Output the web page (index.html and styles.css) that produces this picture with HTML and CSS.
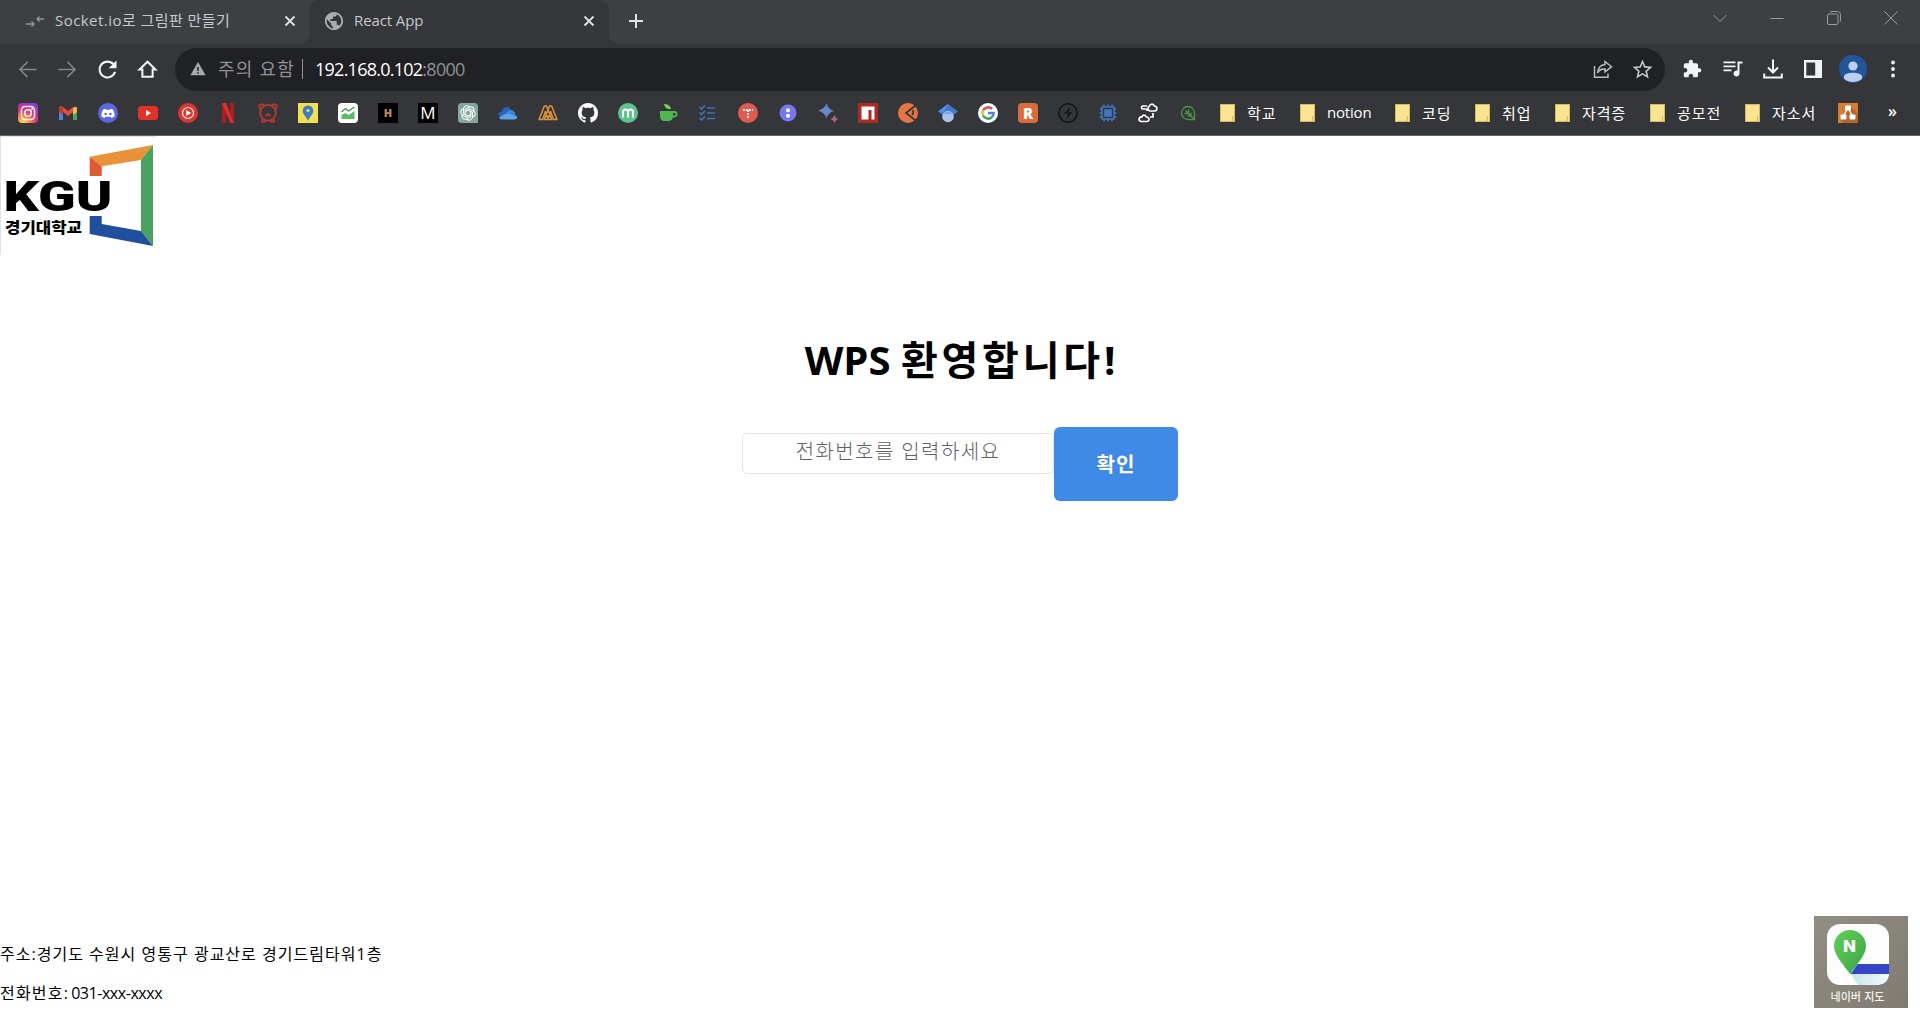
FILE: index.html
```html
<!DOCTYPE html>
<html lang="ko">
<head>
<meta charset="utf-8">
<title>React App</title>
<link rel="stylesheet" href="styles.css">
</head>
<body>
<header class="browser">
  <div class="tabstrip">
    <div class="tab tab-first">
      <svg class="favicon" viewBox="0 0 20 20" fill="none" stroke="#94979a" stroke-width="1.3"><path d="M1 13h8M6.500 10.500 9 13l-2.500 2.500M19 8h-7M14.500 5.500 12 8l2.500 2.500"/></svg>
      <span class="tab-title title-socket">Socket.io로 그림판 만들기</span>
      <svg class="tab-close" viewBox="0 0 12 12"><path d="m1.500 1.500 9 9m0-9-9 9"/></svg>
    </div>
    <div class="tab tab-active">
      <svg class="favicon" viewBox="1 1 22 22"><circle cx="12" cy="12" r="9.500" fill="#35363a"/><path fill="#a9acb0" d="M12 2C6.480 2 2 6.480 2 12s4.480 10 10 10 10-4.480 10-10S17.520 2 12 2zm-1 17.930c-3.950-.490-7-3.850-7-7.930 0-.620.080-1.210.210-1.790L9 15v1c0 1.100.900 2 2 2v1.930zm6.900-2.540c-.260-.810-1-1.390-1.900-1.390h-1v-3c0-.550-.450-1-1-1H8v-2h2c.550 0 1-.450 1-1V7h2c1.100 0 2-.900 2-2v-.410c2.930 1.190 5 4.060 5 7.410 0 2.080-.800 3.970-2.100 5.390z"/></svg>
      <span class="tab-title title-react">React App</span>
      <svg class="tab-close" viewBox="0 0 12 12"><path d="m1.500 1.500 9 9m0-9-9 9"/></svg>
    </div>
    <svg class="new-tab" viewBox="0 0 16 16"><path d="M8 1v14M1 8h14" stroke="#dfe1e5" stroke-width="2"/></svg>
    <div class="window-controls">
      <svg viewBox="0 0 14 14"><path d="m.5 4 6.500 6.500L13.500 4"/></svg>
      <svg viewBox="0 0 14 14"><path d="M.5 7.500h13"/></svg>
      <svg viewBox="0 0 14 14"><rect x=".5" y="3" width="10.500" height="10.500" rx="1.500"/><path d="M3 1.200Q3.500.500 5 .5h5.500q3 0 3 3V9q0 1.500-.8 2"/></svg>
      <svg viewBox="0 0 14 14"><path d="m.5.500 13 13m0-13-13 13"/></svg>
    </div>
  </div>

  <div class="toolbar">
    <div class="nav">
      <svg viewBox="0 0 24 24" fill="#85878a"><path d="M21.500 11.200H6l6.600-6.600L11.500 3.500 3 12l8.500 8.500 1.100-1.100L6 12.800h15.500z"/></svg>
      <svg viewBox="0 0 24 24" fill="#85878a"><path d="M2.500 11.200H18l-6.600-6.600 1.100-1.100L21 12l-8.500 8.500-1.100-1.100 6.600-6.600H2.500z"/></svg>
      <svg viewBox="0 0 24 24" fill="#f1f3f4"><path d="M18.700 5.300C17 3.600 14.600 2.600 12 2.600a9.400 9.400 0 1 0 9.100 11.800h-2.400A7.150 7.150 0 1 1 12 4.900c2 0 3.700.8 5 2.100L13.200 10.800H21.400V2.600z"/></svg>
      <svg viewBox="-1 -1 26 26" fill="none" stroke="#f1f3f4" stroke-width="2.300"><path d="M3 12h3.200v8.300h11.600V12H21l-9-8.800z"/></svg>
    </div>
    <div class="omnibox">
      <svg class="warn" viewBox="0 0 24 22"><path fill="#a7aaad" d="M0 21h24L12 0z"/><path stroke="#202124" stroke-width="2.400" d="M12 8v6m0 2v2.500"/></svg>
      <span class="insecure">주의 요함</span>
      <span class="divider"></span>
      <span class="url">192.168.0.102<span class="port">:8000</span></span>
      <svg class="share" viewBox="0 0 20 20" fill="none" stroke="#b9bbbe" stroke-width="1.500"><path d="M1.500 7v11.200H15V14.500M12 2.500l6.500 5.200-6.500 5.200V10c-4-.2-6 1-7.500 4C5 9 7.500 5.800 12 5.400z"/></svg>
      <svg class="star" viewBox="1.500 1.500 21 21" fill="#c6c8ca"><path d="M22 9.240l-7.190-.62L12 2 9.190 8.630 2 9.240l5.460 4.730L5.820 21 12 17.270 18.180 21l-1.630-7.030L22 9.240zM12 15.400l-3.760 2.270 1-4.280-3.320-2.880 4.380-.38L12 6.100l1.710 4.040 4.380.38-3.320 2.880 1 4.280L12 15.400z"/></svg>
    </div>
    <div class="actions">
      <svg viewBox="1 0 24 24" fill="#f1f3f4"><path d="M20.500 11H19V7c0-1.100-.900-2-2-2h-4V3.500C13 2.120 11.880 1 10.500 1S8 2.120 8 3.500V5H4c-1.100 0-1.990.900-1.990 2v3.800H3.500c1.490 0 2.700 1.210 2.700 2.700s-1.210 2.700-2.700 2.700H2V20c0 1.100.900 2 2 2h3.800v-1.500c0-1.490 1.210-2.700 2.700-2.700s2.700 1.210 2.700 2.700V22H17c1.100 0 2-.900 2-2v-4h1.500c1.380 0 2.500-1.120 2.500-2.500S21.880 11 20.500 11z"/></svg>
      <svg viewBox="2.500 2.500 20 20" fill="#f1f3f4"><path d="M15 5H3v1.800h12zm0 4H3v1.800h12zM3 14.800h8V13H3zM17 5v9.180A3 3 0 1 0 19 17V7h3V5z"/></svg>
      <svg viewBox="0 0 20 20" fill="none" stroke="#f1f3f4" stroke-width="2"><path d="M10 .5V13M5 8.500l5 5 5-5M1.200 14.500v4h17.600v-4"/></svg>
      <svg viewBox="0 0 20 20"><path fill="#f1f3f4" fill-rule="evenodd" d="M1 1h18v18H1zm2.300 2.500v13h8.900v-13z"/></svg>
      <svg class="avatar" viewBox="0 0 28 28"><circle cx="14" cy="14" r="14" fill="#21569a"/><circle cx="14" cy="11" r="4.600" fill="#b9cfea"/><path fill="#b9cfea" d="M5 21.500c0-5 18-5 18 0v2.200a14 14 0 0 1-18 0z"/></svg>
      <svg viewBox="0 0 20 20" fill="#f1f3f4"><circle cx="10" cy="3.500" r="1.900"/><circle cx="10" cy="10" r="1.900"/><circle cx="10" cy="16.500" r="1.900"/></svg>
    </div>
  </div>

  <nav class="bookmarks">
    <svg viewBox="0 0 20 20"><defs><radialGradient id="insta" cx=".25" cy="1" r="1.100"><stop offset="0" stop-color="#ffdc60"/><stop offset=".3" stop-color="#fb8c3c"/><stop offset=".6" stop-color="#e82f79"/><stop offset="1" stop-color="#8a3bdd"/></radialGradient></defs><rect width="20" height="20" rx="4" fill="url(#insta)"/><g fill="none" stroke="#fff" stroke-width="1.500"><rect x="3.500" y="3.500" width="13" height="13" rx="3.500"/><circle cx="10" cy="10" r="3.300"/></g><circle cx="14" cy="6" r="1" fill="#fff"/></svg>
    <svg viewBox="0 0 20 20"><path fill="#4a86e0" d="M1 5h4v12H1z"/><path fill="#48a55a" d="M15 5h4v12h-4z"/><path fill="#f2bb42" d="M15 5q4-3 4 1v3l-4 3z"/><path fill="#dc5044" d="M1 9V5.500C1 2.500 3 2.500 5 4l5 4 5-4v5l-5 4-5-4z"/><path fill="#b83b31" d="M1 9V5.500Q1 3 4 3.400L5 4v8z"/></svg>
    <svg viewBox="0 0 20 20"><circle cx="10" cy="10" r="10" fill="#5b68e5"/><path fill="#fff" d="M7.500 5.700 5 6.500Q3 10 3.500 13.500L6.500 15l.8-1.300h5.400l.8 1.300 3-1.500q.5-3.500-1.500-7l-2.500-.8-.6 1H8.100z"/><circle cx="7.600" cy="11" r="1.300" fill="#5b68e5"/><circle cx="12.400" cy="11" r="1.300" fill="#5b68e5"/></svg>
    <svg viewBox="0 0 20 20"><rect y="3" width="20" height="14" rx="3.500" fill="#e53227"/><path fill="#fff" d="M8 7v6l5-3z"/></svg>
    <svg viewBox="0 0 20 20"><circle cx="10" cy="10" r="10" fill="#df352c"/><circle cx="10" cy="10" r="5.500" fill="none" stroke="#fff" stroke-width="1.200"/><path fill="#fff" d="M8.200 7v6l5-3z"/></svg>
    <svg viewBox="0 0 20 20"><path fill="#a62020" d="M4 0h4v20l-4 .2zM12 0h4v20.200l-4-.2z"/><path fill="#df2c2d" d="M4 0h4l8 20-4-.3z"/></svg>
    <svg viewBox="0 0 20 20" fill="none" stroke="#b43a2e" stroke-width="1.900"><path d="M6 2.500C3-.5-.5 3 2.300 5.800M14 2.500C17-.5 20.500 3 17.700 5.800M3.500 18.800h4M12.500 18.800h4M4.500 16.500 3.500 19M15.500 16.500l1 2.500"/><circle cx="10" cy="9.800" r="7.900"/><path d="m7.300 13.200 2.700-2.400 2.700 2.400" stroke-width="1.600"/></svg>
    <svg viewBox="0 0 20 20"><path fill="#f4df4c" d="M0 0h20v20H0z"/><path fill="#397bcf" d="M10 2.500A5.300 5.300 0 0 1 15.300 8C15.300 11 11.500 14 10 18c-1.500-4-5.300-7-5.300-10A5.300 5.300 0 0 1 10 2.500z"/><circle cx="10" cy="7.500" r="1.600" fill="#f4df4c"/></svg>
    <svg viewBox="0 0 20 20"><rect width="20" height="20" rx="4" fill="#fff"/><path fill="#5bbb67" d="m3.500 12 4-2 3 2 6-4v8h-13z"/><path fill="none" stroke="#3c8b4c" stroke-width="1.200" d="m3.500 9 4-3.500 3 2.500 6-4"/></svg>
    <svg viewBox="0 0 20 20"><path d="M0 0h20v20H0z"/><text class="glyph-h" x="10" y="14">H</text></svg>
    <svg viewBox="0 0 20 20"><path d="M0 0h20v20H0z"/><text class="glyph-m" x="10" y="16">M</text></svg>
    <svg viewBox="0 0 20 20"><path fill="#82a79d" d="M3.500 0h13A3.500 3.500 0 0 1 20 3.500V20H3.500A3.500 3.500 0 0 1 0 16.500v-13A3.500 3.500 0 0 1 3.500 0z"/><g fill="none" stroke="#fff" stroke-width="1.050"><path id="petal" d="M7.300 11.600V6.400l4-2.300c3-1.400 5.500 1.300 4.500 4.200"/><use href="#petal" transform="rotate(60 10 10)"/><use href="#petal" transform="rotate(120 10 10)"/><use href="#petal" transform="rotate(180 10 10)"/><use href="#petal" transform="rotate(240 10 10)"/><use href="#petal" transform="rotate(300 10 10)"/></g></svg>
    <svg viewBox="0 0 20 20"><path fill="#2c62bd" d="M1 13Q-.5 9 3.500 8.500C5 3 11 2.500 13 7l-2 5z"/><path fill="#3f84db" d="M8.500 9.500C11 5.500 16.500 7 17 10.500l1 3-10-1z"/><path fill="#5ba6e8" d="M1 14.200Q6 11 9 10.500l10.300 3Q19.500 16.500 16 16.500H4q-2.200 0-3-2.300z"/></svg>
    <svg viewBox="0 0 20 20" fill="none" stroke="#db943a" stroke-width="1.500" stroke-linejoin="round"><path d="M1 16.500 6.300 3h2.200l5.200 13.500h-3.500L7.400 8.500 4.600 16.500zM6.300 16.500 11.500 3h2.200L19 16.500h-3.600L12.600 8.500 9.800 16.500z"/></svg>
    <svg viewBox="0 0 16 16"><path fill="#fff" d="M8 0C3.580 0 0 3.580 0 8c0 3.540 2.290 6.530 5.470 7.590.4.070.55-.17.55-.38 0-.19-.01-.82-.01-1.490-2.010.37-2.530-.49-2.690-.94-.09-.23-.48-.94-.82-1.130-.28-.15-.68-.52-.01-.53.630-.01 1.080.58 1.230.82.720 1.210 1.870.87 2.330.66.070-.52.280-.87.510-1.070-1.780-.2-3.640-.89-3.640-3.950 0-.87.310-1.590.82-2.150-.08-.2-.36-1.020.08-2.120 0 0 .67-.21 2.200.82.640-.18 1.320-.27 2-.27s1.360.09 2 .27c1.530-1.040 2.200-.82 2.200-.82.440 1.100.16 1.920.08 2.120.51.560.82 1.270.82 2.150 0 3.070-1.870 3.750-3.650 3.950.29.250.54.730.54 1.480 0 1.070-.01 1.930-.01 2.200 0 .21.150.46.550.38A8.010 8.010 0 0 0 16 8c0-4.420-3.580-8-8-8z"/></svg>
    <svg viewBox="0 0 20 20"><circle cx="10" cy="10" r="10" fill="#5cc58d"/><path fill="none" stroke="#fff" stroke-width="2" d="M5 14.500V9q0-2.500 2.500-2.500T10 9v5.500M10 9q0-2.500 2.500-2.500T15 9v5.500"/></svg>
    <svg viewBox="0 0 20 20"><path fill="#51b850" d="M2 8h13v4.500q0 5.500-5 5.500H7q-5 0-5-5.500z"/><path fill="none" stroke="#51b850" stroke-width="1.800" d="M14 9h2.500q2.500 0 2 2.500t-4.500 2"/><path fill="#71d35c" d="M6 1q6 0 7 5-6 1-7-5z"/></svg>
    <svg viewBox="0 0 20 20" fill="none" stroke="#416fbb" stroke-width="1.700"><path d="m1.500 4 2 2 3.500-3.500m-5.500 7 2 2L7 8m-5.500 7 2 2L7 13.500M9 5h8M9 10h8M9 15.500h8"/></svg>
    <svg viewBox="0 0 20 20"><circle cx="10" cy="10" r="10" fill="#e45a50"/><path fill="none" stroke="#fff" stroke-width="1.800" stroke-dasharray="2 1" d="M5 7h10M10 7v9"/></svg>
    <svg viewBox="0 0 20 20"><circle cx="10" cy="10" r="8.500" fill="#7777ef"/><circle cx="10" cy="7.300" r="2" fill="#fff"/><circle cx="10" cy="12.700" r="2" fill="#fff"/></svg>
    <svg viewBox="0 0 20 20"><defs><linearGradient id="spark" y2="1"><stop stop-color="#d25f72"/><stop offset=".5" stop-color="#5590dd"/><stop offset="1" stop-color="#c15f75"/></linearGradient></defs><path fill="url(#spark)" d="M8.500 0Q10 6.500 16 8q-6 1.500-7.500 7.500Q7 9.500 0 7.500 7 6 8.500 0z"/><path fill="#b16583" d="M16.500 12q.8 3 3.500 4-2.700 1-3.500 4-1-3-4-4 3-1 4-4z"/></svg>
    <svg viewBox="0 0 20 20"><path fill="#ad2922" d="M0 0h20v20H0z"/><path fill="#fff" d="M3.500 3.500h13v13h-3V7h-3v9.500h-7z"/></svg>
    <svg viewBox="0 0 20 20"><circle cx="10" cy="10" r="10" fill="#e77542"/><path fill="none" stroke="#35363a" stroke-width="1.700" d="M17.500 2.500 8 10l9.500 7.500M14.500 7q2 2-.5 5"/></svg>
    <svg viewBox="0 0 20 20"><path fill="#4278cd" d="M10 1 0 8.500 4.500 12h11L20 8.500z"/><path fill="#5693e9" d="M10 1 0 8.500 6 9z"/><circle cx="10" cy="13.500" r="5.800" fill="#a8c3ed"/><path fill="#79a5e5" d="M4.800 11q5-5 10.400 0z"/></svg>
    <svg viewBox="0 0 20 20"><circle cx="10" cy="10" r="10" fill="#fff"/><g fill="none" stroke-width="2.500"><path stroke="#dc5145" d="M5 7.500A5.600 5.600 0 0 1 14 6"/><path stroke="#eebb3d" d="M5 7.500a5.600 5.600 0 0 0 0 5"/><path stroke="#43a35a" d="M5 12.500a5.600 5.600 0 0 0 8.800 1.700"/><path stroke="#4c82e5" d="M13.800 14.200A5.600 5.600 0 0 0 15.600 10H10"/></g></svg>
    <svg viewBox="0 0 20 20"><rect width="20" height="20" rx="4" fill="#dc6d3a"/><text class="glyph-r" x="10" y="15.500">R</text></svg>
    <svg viewBox="0 0 20 20"><circle cx="10" cy="10" r="9.200" fill="none" stroke="#111214" stroke-width="1.400"/><path fill="#111214" d="m12.500 4-6.800 7 4.500-1-1.800 6 6-7-4 .6z"/></svg>
    <svg viewBox="0 0 20 20" fill="none" stroke="#4276bd" stroke-width="1.600"><path d="M6 1.500v17M10 1.500v17M14 1.500v17M1.500 6h17M1.500 10h17M1.500 14h17"/><rect x="4" y="4" width="12" height="12" fill="#35363a"/><rect x="7" y="7" width="6" height="6" fill="#4276bd"/></svg>
    <svg viewBox="0 0 20 20" fill="none" stroke="#fff" stroke-width="1.700"><path d="M12 8q-3-1-1.500-4 3-5 6-1 3.500 1 2 4-.5 1-2 1zM3 18.500q-3-1-1.500-3.500.8-1.200 2.200-1 2.300-4 4.700 0 3.200.4 2.500 3-.4 1.500-2 1.500zM9 3H5q-1.500 0-1.500 1.500T5 6h3q1 0 1 2M15 10v4h-3"/></svg>
    <svg viewBox="0 0 20 20" fill="none" stroke="#4b974b" stroke-width="1.300"><path d="M16.500 16.500H10A6.500 6.500 0 1 1 16.500 10zM16.500 16.500l-9-9m3 3V6.500m0 4H6.500m6.500 2.500V9.500m0 3.500h-3.500"/></svg>
    <div class="folder"><i></i><span>학교</span></div>
    <div class="folder wide"><i></i><span class="latin">notion</span></div>
    <div class="folder"><i></i><span>코딩</span></div>
    <div class="folder"><i></i><span>취업</span></div>
    <div class="folder wide"><i></i><span>자격증</span></div>
    <div class="folder wide"><i></i><span>공모전</span></div>
    <div class="folder wide"><i></i><span>자소서</span></div>
    <svg viewBox="0 0 20 20"><path fill="#d77c31" d="M0 0h20v20H0z"/><path fill="#b8652a" d="m12 3 8 8v9H5l-2-3z"/><path stroke="#fff" stroke-width="1.400" d="m10 5-5 9m5-9 5 9"/><g fill="#fff"><rect x="7" y="2.500" width="6" height="5" rx="1"/><rect x="2.500" y="11.500" width="6" height="5" rx="1"/><rect x="11.500" y="11.500" width="6" height="5" rx="1"/></g></svg>
    <span class="more">»</span>
  </nav>
</header>

<main class="page">
  <svg class="logo" viewBox="0 0 156 119">
    <path fill="#dadada" d="M0 0h.8v119H0zM0 0h156v.8H0z"/>
    <path fill="#e89338" d="M89.700 20.700 153 9l-12 15-39.300 6.300z"/>
    <path fill="#df5b32" d="m89.700 20.700 12 9.600V40h-12z"/>
    <path fill="#49a35d" d="M153 9v101l-12-15V24z"/>
    <path fill="#204fa0" d="M89.700 80h12v8l39.300 7 12 15-63.300-12z"/>
    <text class="kgu" x="3.500" y="75" textLength="109" lengthAdjust="spacingAndGlyphs">KGU</text>
    <text class="univ" x="5" y="97" textLength="77" lengthAdjust="spacingAndGlyphs">경기대학교</text>
  </svg>
  <h1 class="welcome">WPS <span class="welcome-ko">환영합니다</span>!</h1>
  <form class="login">
    <input class="phone" type="text" placeholder="전화번호를 입력하세요">
    <button class="confirm" type="button">확인</button>
  </form>
  <footer class="footer">
    <div class="contact">
      <p class="address">주소:경기도 수원시 영통구 광교산로 경기드림타워1층</p>
      <p class="tel"><span class="tel-label">전화번호</span>: 031-xxx-xxxx</p>
    </div>
    <svg class="map" viewBox="0 0 94 92">
      <defs>
        <linearGradient id="stone" x2="1" y2="1"><stop stop-color="#918e84"/><stop offset="1" stop-color="#807b72"/></linearGradient>
        <linearGradient id="pin" y2="1"><stop stop-color="#5fd053"/><stop offset="1" stop-color="#3da34b"/></linearGradient>
        <linearGradient id="shade" x2="1"><stop stop-color="#c5e4ec"/><stop offset="1" stop-color="#f5fafc"/></linearGradient>
      </defs>
      <path fill="url(#stone)" d="M0 0h94v92H0z"/>
      <rect x="13" y="8" width="62" height="61" rx="13" fill="#fdfdfe"/>
      <path fill="url(#shade)" d="M37 58h38q-1 11-13 11H44z"/>
      <path fill="#3546cb" d="M43.500 48H75v10H36.500z"/>
      <path fill="url(#pin)" d="M36 14a16 16 0 0 1 16 16c0 9-9 18-16 28-7-10-16-19-16-28a16 16 0 0 1 16-16z"/>
      <text class="naver-n" x="35.500" y="35.500" textLength="13" lengthAdjust="spacingAndGlyphs">N</text>
      <text class="naver-label" x="43.500" y="85" textLength="54" lengthAdjust="spacingAndGlyphs">네이버 지도</text>
    </svg>
  </footer>
</main>
</body>
</html>
```
FILE: styles.css
```css
* { box-sizing: border-box; }

body {
  margin: 0;
  height: 1018px;
  display: flex;
  flex-direction: column;
  overflow: hidden;
  background: #fff;
  color: #000;
  font-family: "Open Sans", "Noto Sans CJK KR", sans-serif;
}

svg { display: block; flex: none; overflow: visible; }

/* Browser frame */
.browser {
  height: 136px;
  flex: none;
  background: #35363a;
  border-bottom: 1px solid #686769;
}

.tabstrip {
  height: 44px;
  display: flex;
  align-items: center;
  background: #35363a;
}

.tab {
  height: 44px;
  display: flex;
  align-items: center;
  padding-bottom: 2px;
  font-size: 15px;
  color: #c6c8cb;
  white-space: nowrap;
}

.tab-first {
  width: 309px;
  padding-left: 25px;
  background: #3c4043;
  border-radius: 0 0 10px 0;
}

.tab-active {
  width: 300px;
  padding-left: 15px;
  background: #35363a;
  border-radius: 10px 10px 0 0;
  box-shadow: 0 -10px 0 #3c4043;
}

.favicon { width: 20px; height: 20px; margin-right: 10px; }
.tab-title { flex: 1; margin-top: -3px; }
.title-socket { letter-spacing: 0.45px; }
.title-react { letter-spacing: -0.1px; }
.tab-close {
  width: 12px;
  height: 12px;
  margin-right: 13px;
  fill: none;
  stroke: #dfe1e5;
  stroke-width: 1.8;
}

.tab-active .tab-close { margin-right: 14px; }

.tabstrip > .new-tab {
  width: 50px;
  height: 44px;
  padding: 13px 15px 15px 19px;
  background: #3c4043;
  border-radius: 0 0 0 10px;
}

.window-controls {
  flex: 1;
  height: 44px;
  padding: 11px 22px 0 0;
  display: flex;
  justify-content: flex-end;
  gap: 43px;
  background: #3c4043;
}

.window-controls svg {
  width: 14px;
  height: 14px;
  fill: none;
  stroke: #9b9ea1;
}

.toolbar {
  height: 52px;
  padding: 0 18px 2px 16px;
  display: flex;
  align-items: center;
}

.nav { width: 159px; flex: none; display: flex; gap: 17px; }
.nav svg { width: 23px; height: 23px; }

.omnibox {
  width: 1490px;
  flex: none;
  height: 43px;
  padding: 0 12px 0 15px;
  display: flex;
  align-items: center;
  border-radius: 22px;
  background: #202124;
  color: #8f9296;
  font-size: 18px;
  white-space: nowrap;
}

.warn { width: 16px; height: 14px; margin-right: 12px; }
.insecure { width: 84px; letter-spacing: 1.2px; margin-top: -3px; }
.divider { width: 1px; height: 20px; margin-right: 12px; background: #909397; }
.url { flex: 1; color: #fff; letter-spacing: -0.75px; margin-top: -1px; }
.port { color: #8f9296; }
.share { width: 20px; height: 20px; margin-right: 19px; }
.star { width: 21px; height: 21px; }

.actions { flex: 1; display: flex; align-items: center; gap: 20px; padding-left: 18px; }
.actions svg { width: 20px; height: 20px; }
.actions .avatar { width: 28px; height: 28px; margin: 0 -4px; }

.bookmarks {
  height: 34px;
  padding-left: 18px;
  display: flex;
  align-items: center;
}

.bookmarks svg { width: 20px; height: 20px; margin-right: 20px; }

.folder {
  width: 80px;
  flex: none;
  display: flex;
  align-items: center;
  color: #fff;
  font-size: 15px;
  white-space: nowrap;
}

.folder.wide { width: 95px; }

.folder i {
  width: 15px;
  height: 18px;
  margin: 0 12px 0 2px;
  border: 1px solid #d0b95e;
  background: linear-gradient(#d0b95e, #d0b95e) 11px 11px / 1px 6px no-repeat, #fae391;
}

.folder span { letter-spacing: 1px; margin-top: -2px; }
.folder .latin { letter-spacing: -0.2px; }
.bookmarks .folder ~ svg { margin-right: 30px; }
.more { color: #fff; font-size: 16px; font-weight: 600; margin-top: -4px; }

.glyph-h, .glyph-m, .glyph-r { text-anchor: middle; font-family: "Open Sans", sans-serif; }
.glyph-h { font-size: 11px; font-weight: 800; fill: #b68b55; }
.glyph-m { font-size: 17px; fill: #fff; }
.glyph-r { font-size: 15px; font-weight: 800; fill: #fff; }

/* Page */
.page {
  flex: 1;
  display: flex;
  flex-direction: column;
  align-items: center;
}

.logo { width: 156px; height: 119px; align-self: flex-start; }
.kgu { font: 900 43px Roboto, sans-serif; }
.univ { font: 900 15px "Noto Sans CJK KR", sans-serif; }

.welcome {
  margin: 77px 0 0;
  height: 56px;
  line-height: 56px;
  font-size: 40px;
  font-weight: 700;
  white-space: nowrap;
}

.welcome-ko { letter-spacing: 3.8px; }

.login {
  height: 74px;
  margin-top: 39px;
  display: flex;
}

.phone {
  width: 312px;
  height: 41px;
  margin-top: 6px;
  padding: 0 0 4px;
  border: 1px solid #e3e4e6;
  border-radius: 5px;
  outline: 0;
  text-align: center;
  font: 300 20px "Open Sans", "Noto Sans CJK KR", sans-serif;
  letter-spacing: 1.4px;
}

.phone::placeholder { color: #606060; }

.confirm {
  width: 124px;
  height: 74px;
  padding: 0 0 2px;
  border: 0;
  border-radius: 6px;
  background: #3f8ae7;
  color: #fff;
  font: 700 20px "Open Sans", "Noto Sans CJK KR", sans-serif;
  letter-spacing: 1px;
}

.footer {
  width: 100%;
  margin-top: auto;
  padding: 0 12px 10px 0;
  display: flex;
  justify-content: space-between;
  align-items: flex-end;
}

.contact { font-size: 16px; line-height: 24px; white-space: nowrap; }
.contact p { margin: 0 0 15px; }
.contact .tel { margin-bottom: 3px; letter-spacing: -0.45px; }
.address { letter-spacing: 1.02px; }
.tel-label { letter-spacing: 1.2px; }

.map { width: 94px; height: 92px; }
.naver-n { font: 900 17px Roboto, sans-serif; fill: #fff; text-anchor: middle; }
.naver-label { font: 500 11px "Noto Sans CJK KR", sans-serif; fill: #f4f3ef; text-anchor: middle; }
```
